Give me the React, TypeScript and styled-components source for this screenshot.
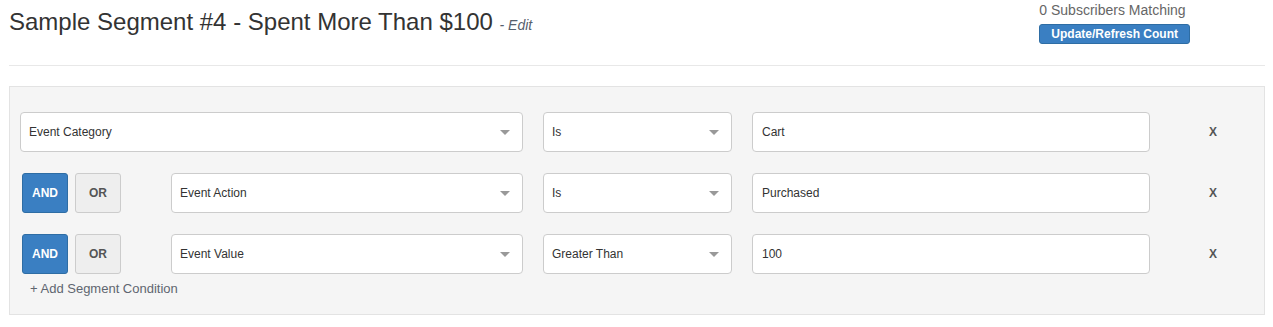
import React from "react"
import styled, { createGlobalStyle } from "styled-components"

const GlobalStyle = createGlobalStyle`
  html, body {
    margin: 0;
    padding: 0;
    background: #fff;
    font-family: "Liberation Sans", Arial, sans-serif;
    color: #333;
  }
`

type Condition = {
  joiner?: "AND" | "OR"
  field: string
  operator: string
  value: string
}

const conditions: Condition[] = [
  { field: "Event Category", operator: "Is", value: "Cart" },
  { joiner: "AND", field: "Event Action", operator: "Is", value: "Purchased" },
  { joiner: "AND", field: "Event Value", operator: "Greater Than", value: "100" },
]

const Caret = () => (
  <svg width="10" height="5" viewBox="0 0 10 5">
    <path d="M0 0 L10 0 L5 5 Z" fill="#999" />
  </svg>
)

const Select = ({ label }: { label: string }) => (
  <SelectBox>
    <span>{label}</span>
    <Caret />
  </SelectBox>
)

const ConditionRow = ({ condition }: { condition: Condition }) => (
  <Row>
    <FieldCell>
      {condition.joiner && (
        <Joiners>
          <JoinButton $active={condition.joiner === "AND"}>AND</JoinButton>
          <JoinButton $active={condition.joiner === "OR"}>OR</JoinButton>
        </Joiners>
      )}
      <Select label={condition.field} />
    </FieldCell>
    <Select label={condition.operator} />
    <ValueInput defaultValue={condition.value} />
    <Remove>X</Remove>
  </Row>
)

export default function App() {
  return (
    <Page>
      <GlobalStyle />
      <Header>
        <Title>
          Sample Segment #4 - Spent More Than $100 <EditLink>- Edit</EditLink>
        </Title>
        <Counter>
          <Matching>0 Subscribers Matching</Matching>
          <RefreshButton>Update/Refresh Count</RefreshButton>
        </Counter>
      </Header>
      <Divider />
      <Panel>
        <Rows>
          {conditions.map((c, i) => (
            <ConditionRow key={i} condition={c} />
          ))}
        </Rows>
        <AddCondition>+ Add Segment Condition</AddCondition>
      </Panel>
    </Page>
  )
}

const Page = styled.div`
  padding: 0 8px 0 9px;
`

const Header = styled.div`
  display: flex;
  justify-content: space-between;
  align-items: flex-start;
  height: 65px;
`

const Title = styled.h1`
  margin: 7px 0 0;
  font-size: 24px;
  line-height: 30px;
  font-weight: normal;
  color: #333;
`

const EditLink = styled.span`
  font-size: 14px;
  font-style: italic;
  color: #56606d;
`

const Counter = styled.div`
  display: flex;
  flex-direction: column;
  align-items: flex-start;
  padding-right: 75px;
`

const Matching = styled.div`
  font-size: 14px;
  line-height: 20px;
  color: #666;
`

const RefreshButton = styled.button`
  margin-top: 4px;
  height: 20px;
  padding: 0 11px;
  border: 1px solid #2e6da4;
  border-radius: 3px;
  background: #3a7fc2;
  color: #fff;
  font-family: "Liberation Sans", Arial, sans-serif;
  font-size: 12px;
  font-weight: bold;
  line-height: 18px;
`

const Divider = styled.hr`
  margin: 0 0 20px;
  border: 0;
  border-top: 1px solid #e8e8e8;
`

const Panel = styled.div`
  background: #f5f5f5;
  border: 1px solid #e3e3e3;
  padding: 25px 10px 16px;
`

const Rows = styled.div`
  display: flex;
  flex-direction: column;
  gap: 21px;
`

const Row = styled.div`
  display: grid;
  grid-template-columns: 503px 189px 398px 1fr;
  column-gap: 20px;
  height: 40px;
  align-items: stretch;
`

const FieldCell = styled.div`
  display: flex;
  min-width: 0;
`

const Joiners = styled.div`
  display: flex;
  gap: 7px;
  width: 149px;
  padding-left: 2px;
  flex-shrink: 0;
`

const JoinButton = styled.button<{ $active: boolean }>`
  width: 46px;
  height: 40px;
  border-radius: 3px;
  border: 1px solid ${(p) => (p.$active ? "#2e6da4" : "#ccc")};
  background: ${(p) => (p.$active ? "#3a7fc2" : "#eee")};
  color: ${(p) => (p.$active ? "#fff" : "#555")};
  font-family: "Liberation Sans", Arial, sans-serif;
  font-size: 12px;
  font-weight: bold;
  padding: 0;
`

const SelectBox = styled.div`
  flex: 1;
  display: flex;
  align-items: center;
  justify-content: space-between;
  box-sizing: border-box;
  height: 40px;
  padding: 0 12px 0 8px;
  background: #fff;
  border: 1px solid #ccc;
  border-radius: 4px;
  font-size: 12px;
  color: #333;
`

const ValueInput = styled.input`
  box-sizing: border-box;
  height: 40px;
  padding: 0 9px;
  background: #fff;
  border: 1px solid #ccc;
  border-radius: 4px;
  font-family: "Liberation Sans", Arial, sans-serif;
  font-size: 12px;
  color: #333;
  outline: none;
`

const Remove = styled.div`
  display: flex;
  align-items: center;
  justify-content: center;
  font-size: 12px;
  font-weight: bold;
  color: #555;
  padding-left: 2px;
`

const AddCondition = styled.div`
  margin: 6px 0 0 10px;
  font-size: 13px;
  line-height: 18px;
  color: #5f6670;
`
